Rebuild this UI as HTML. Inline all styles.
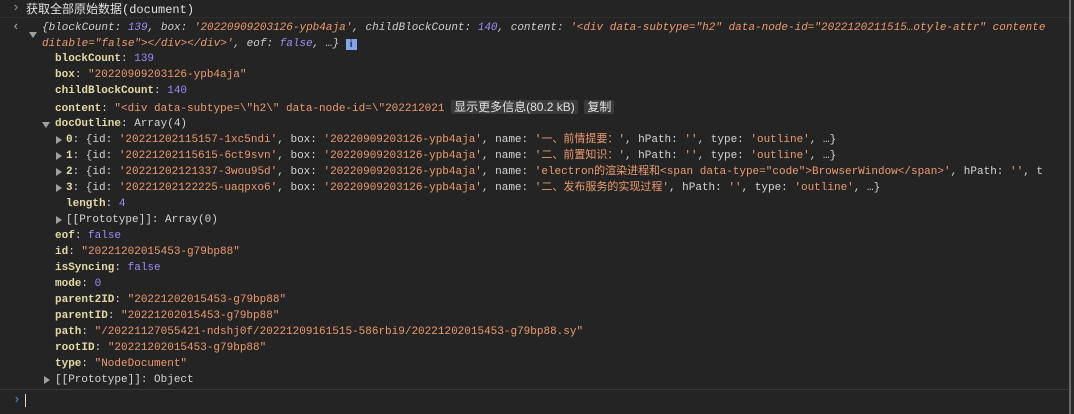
<!DOCTYPE html>
<html><head><meta charset="utf-8"><style>
body{margin:0;width:1074px;height:414px;background:#242424;overflow:hidden;position:relative;font:11px "Liberation Mono","Noto Sans CJK SC",monospace;color:#d4d4d4}
.l{position:absolute;white-space:pre;height:16px;line-height:16px}
.k{color:#e3d9a5;font-weight:bold}.s{color:#ec9a6e}.n{color:#9a8cf7}
.i{font-style:italic;color:#cfcfcf}
.t{position:absolute;width:0;height:0;border-top:4px solid transparent;border-bottom:4px solid transparent;border-left:6px solid #a0a0a0}
.d{position:absolute;width:0;height:0;border-left:4px solid transparent;border-right:4px solid transparent;border-top:6px solid #a0a0a0}
.cj{font-family:"Noto Sans CJK SC",sans-serif}
.btn{background:#3a3a3a;color:#e0e0e0;font-family:"Liberation Sans","Noto Sans CJK SC",sans-serif;font-size:12px;padding:0 3px;border-radius:2px}
</style></head><body>
<div style="position:absolute;left:0;top:17px;width:1070px;height:1px;background:#2e2e2e"></div>
<div style="position:absolute;right:0;top:0;width:4px;height:414px;background:#2a2a2a"></div>
<div style="position:absolute;right:3px;top:0;width:2px;height:414px;background:#6a6a6a"></div>
<div class="l" style="left:12px;top:0;color:#999;font-size:13px">›</div>
<div class="l" style="left:26px;top:1px;color:#e0e0e0;font-size:12px"><span class="cj">获取全部原始数据</span>(document)</div>
<div class="l" style="left:12px;top:19px;color:#aaa;font-size:13px">‹</div>
<div class="d" style="left:29px;top:32px"></div>
<div class="l i" style="left:42px;top:20px">{blockCount: <span class="n">139</span>, box: <span class="s">'20220909203126-ypb4aja'</span>, childBlockCount: <span class="n">140</span>, content: <span class="s">'&lt;div data-subtype="h2" data-node-id="2022120211515…otyle-attr" contente</span></div>
<div class="l i" style="left:42px;top:36px"><span class="s">ditable="false"&gt;&lt;/div&gt;&lt;/div&gt;'</span>, eof: <span class="n">false</span>, …} <span style="display:inline-block;width:11px;height:11px;background:#7ea6e8;color:#1e2a44;font:bold 10px 'Liberation Sans';text-align:center;line-height:11px;font-style:normal;vertical-align:-1px">i</span></div>
<div class="l" style="left:55px;top:51px"><span class="k">blockCount</span>: <span class="n">139</span></div>
<div class="l" style="left:55px;top:67px"><span class="k">box</span>: <span class="s">"20220909203126-ypb4aja"</span></div>
<div class="l" style="left:55px;top:83px"><span class="k">childBlockCount</span>: <span class="n">140</span></div>
<div class="l" style="left:55px;top:99px"><span class="k">content</span>: <span class="s">"&lt;div data-subtype=\"h2\" data-node-id=\"202212021</span> <span class="btn">显示更多信息(80.2 kB)</span> <span class="btn">复制</span></div>
<div class="d" style="left:42px;top:122px"></div>
<div class="l" style="left:55px;top:116px"><span class="k">docOutline</span>: Array(4)</div>
<div class="t" style="left:56px;top:136px"></div>
<div class="l" style="left:66px;top:132px"><span class="k">0</span>: {id: <span class="s">'20221202115157-1xc5ndi'</span>, box: <span class="s">'20220909203126-ypb4aja'</span>, name: <span class="s">'一、前情提要：'</span>, hPath: <span class="s">''</span>, type: <span class="s">'outline'</span>, …}</div>
<div class="t" style="left:56px;top:152px"></div>
<div class="l" style="left:66px;top:148px"><span class="k">1</span>: {id: <span class="s">'20221202115615-6ct9svn'</span>, box: <span class="s">'20220909203126-ypb4aja'</span>, name: <span class="s">'二、前置知识：'</span>, hPath: <span class="s">''</span>, type: <span class="s">'outline'</span>, …}</div>
<div class="t" style="left:56px;top:168px"></div>
<div class="l" style="left:66px;top:164px"><span class="k">2</span>: {id: <span class="s">'20221202121337-3wou95d'</span>, box: <span class="s">'20220909203126-ypb4aja'</span>, name: <span class="s">'electron的渲染进程和&lt;span data-type="code"&gt;BrowserWindow&lt;/span&gt;'</span>, hPath: <span class="s">''</span>, t</div>
<div class="t" style="left:56px;top:184px"></div>
<div class="l" style="left:66px;top:180px"><span class="k">3</span>: {id: <span class="s">'20221202122225-uaqpxo6'</span>, box: <span class="s">'20220909203126-ypb4aja'</span>, name: <span class="s">'二、发布服务的实现过程'</span>, hPath: <span class="s">''</span>, type: <span class="s">'outline'</span>, …}</div>
<div class="l" style="left:66px;top:196px"><span class="k">length</span>: <span class="n">4</span></div>
<div class="t" style="left:56px;top:216px"></div>
<div class="l" style="left:66px;top:212px">[[Prototype]]: Array(0)</div>
<div class="l" style="left:55px;top:228px"><span class="k">eof</span>: <span class="n">false</span></div>
<div class="l" style="left:55px;top:244px"><span class="k">id</span>: <span class="s">"20221202015453-g79bp88"</span></div>
<div class="l" style="left:55px;top:260px"><span class="k">isSyncing</span>: <span class="n">false</span></div>
<div class="l" style="left:55px;top:276px"><span class="k">mode</span>: <span class="n">0</span></div>
<div class="l" style="left:55px;top:292px"><span class="k">parent2ID</span>: <span class="s">"20221202015453-g79bp88"</span></div>
<div class="l" style="left:55px;top:308px"><span class="k">parentID</span>: <span class="s">"20221202015453-g79bp88"</span></div>
<div class="l" style="left:55px;top:324px"><span class="k">path</span>: <span class="s">"/20221127055421-ndshj0f/20221209161515-586rbi9/20221202015453-g79bp88.sy"</span></div>
<div class="l" style="left:55px;top:340px"><span class="k">rootID</span>: <span class="s">"20221202015453-g79bp88"</span></div>
<div class="l" style="left:55px;top:356px"><span class="k">type</span>: <span class="s">"NodeDocument"</span></div>
<div class="t" style="left:44px;top:376px"></div>
<div class="l" style="left:55px;top:372px">[[Prototype]]: Object</div>
<div style="position:absolute;left:0;top:389px;width:1068px;height:1px;background:#3a3a3a"></div>
<div class="l" style="left:13px;top:392px;color:#4f8fd8;font-size:13px">›</div>
<div style="position:absolute;left:25px;top:394px;width:1px;height:13px;background:#ddd"></div>
</body></html>
